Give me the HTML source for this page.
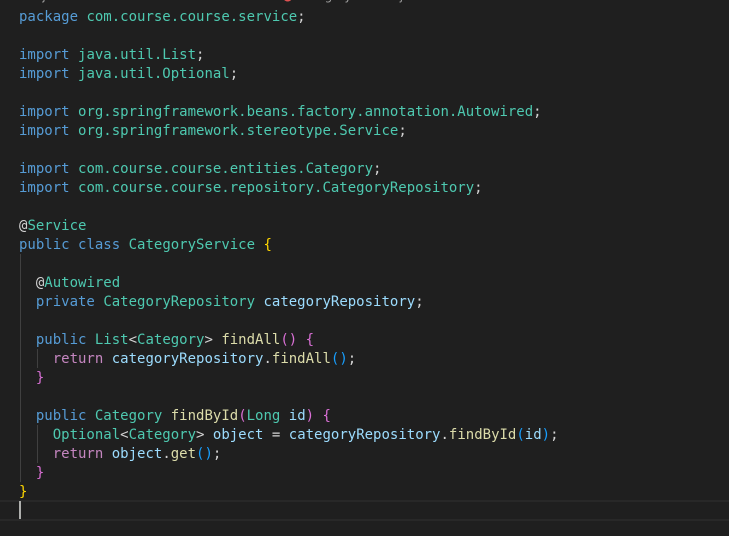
<!DOCTYPE html>
<html><head><meta charset="utf-8"><style>
html,body{margin:0;padding:0;background:#1f1f1f;width:729px;height:536px;overflow:hidden;position:relative}
pre{position:absolute;left:19px;top:7.5px;margin:0;font-family:"DejaVu Sans Mono","Liberation Mono",monospace;font-size:14px;line-height:19px;color:#d4d4d4}
.k{color:#569cd6}.t{color:#4ec9b0}.v{color:#9cdcfe}.f{color:#dcdcaa}.c{color:#c586c0}
.g{color:#ffd700}.p{color:#da70d6}.b{color:#179fff}.a{color:#d4d4d4}
.guide{position:absolute;width:1px;background:#404040}
.cur{position:absolute;left:0;right:0;top:500px;height:17px;border-top:2px solid #282828;border-bottom:2px solid #282828}
.caret{position:absolute;left:19px;top:501px;width:2px;height:18px;background:#aeafad}
.bc{position:absolute;left:0;top:-11px;font-family:"DejaVu Sans","Liberation Sans",sans-serif;font-size:12px;color:#a0a0a0;white-space:nowrap}
</style></head><body>
<div class="bc">main › java › com › course › course › service › <span style="color:#e05252;margin-left:4px">●</span> CategoryService.java › …</div>
<div class="cur"></div>
<div class="caret"></div>
<div class="guide" style="left:20px;top:254px;height:228px"></div>
<div class="guide" style="left:37px;top:349px;height:19px"></div>
<div class="guide" style="left:37px;top:425px;height:38px"></div>
<pre><span class="k">package</span> <span class="t">com.course.course.service</span>;

<span class="k">import</span> <span class="t">java.util.List</span>;
<span class="k">import</span> <span class="t">java.util.Optional</span>;

<span class="k">import</span> <span class="t">org.springframework.beans.factory.annotation.Autowired</span>;
<span class="k">import</span> <span class="t">org.springframework.stereotype.Service</span>;

<span class="k">import</span> <span class="t">com.course.course.entities.Category</span>;
<span class="k">import</span> <span class="t">com.course.course.repository.CategoryRepository</span>;

<span class="a">@</span><span class="t">Service</span>
<span class="k">public</span> <span class="k">class</span> <span class="t">CategoryService</span> <span class="g">{</span>

  <span class="a">@</span><span class="t">Autowired</span>
  <span class="k">private</span> <span class="t">CategoryRepository</span> <span class="v">categoryRepository</span>;

  <span class="k">public</span> <span class="t">List</span>&lt;<span class="t">Category</span>&gt; <span class="f">findAll</span><span class="p">()</span> <span class="p">{</span>
    <span class="c">return</span> <span class="v">categoryRepository</span>.<span class="f">findAll</span><span class="b">()</span>;
  <span class="p">}</span>

  <span class="k">public</span> <span class="t">Category</span> <span class="f">findById</span><span class="p">(</span><span class="t">Long</span> <span class="v">id</span><span class="p">)</span> <span class="p">{</span>
    <span class="t">Optional</span>&lt;<span class="t">Category</span>&gt; <span class="v">object</span> = <span class="v">categoryRepository</span>.<span class="f">findById</span><span class="b">(</span><span class="v">id</span><span class="b">)</span>;
    <span class="c">return</span> <span class="v">object</span>.<span class="f">get</span><span class="b">()</span>;
  <span class="p">}</span>
<span class="g">}</span>
</pre>
</body></html>
